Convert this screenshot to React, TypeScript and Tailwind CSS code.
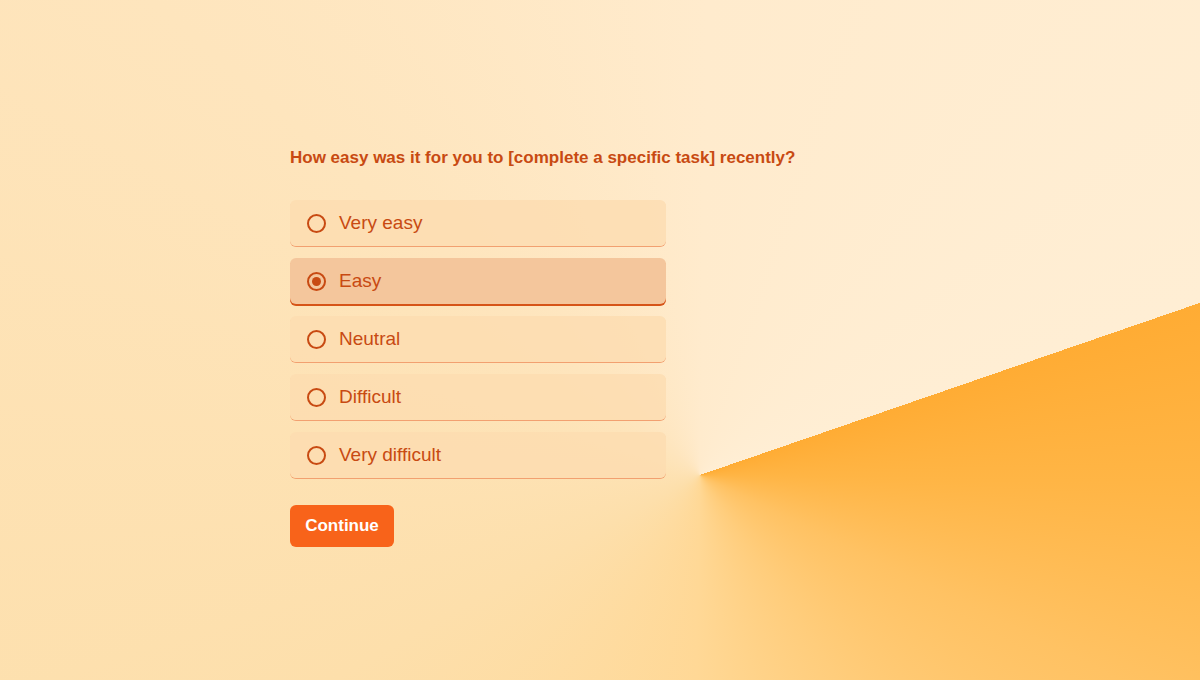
import { useState } from 'react'

const options = ['Very easy', 'Easy', 'Neutral', 'Difficult', 'Very difficult']

export default function App() {
  const [selected, setSelected] = useState('Easy')

  return (
    <div className="h-[680px] w-[1200px] overflow-hidden bg-[conic-gradient(from_71deg_at_700px_475px,#ffac34_0deg,#ffb545_20deg,#ffc263_45deg,#ffcd7c_75deg,#ffd896_110deg,#fddfab_170deg,#fee5bd_240deg,#ffebcd_290deg,#ffeed4_360deg)] font-['Liberation_Sans',Arial,sans-serif]">
      <div className="mx-auto w-[620px] pt-[146px]">
        <h1 className="text-[17px] font-bold leading-6 text-[#c84a12]">
          How easy was it for you to [complete a specific task] recently?
        </h1>

        <div className="mt-[30px] flex w-[376px] flex-col gap-3">
          {options.map((opt) => {
            const active = opt === selected
            return (
              <button
                key={opt}
                onClick={() => setSelected(opt)}
                className={`flex h-[46px] items-center gap-[13px] rounded-md px-[17px] text-left ${
                  active
                    ? 'bg-[#f4c69c] shadow-[0_2px_0_#d65418]'
                    : 'bg-[#fddcb0]/80 shadow-[0_1px_0_#f2a070]'
                }`}
              >
                <span className="flex h-[19px] w-[19px] items-center justify-center rounded-full border-2 border-[#c84a12]">
                  {active && <span className="h-[9px] w-[9px] rounded-full bg-[#c84a12]" />}
                </span>
                <span className="text-[19px] text-[#c84a12]">{opt}</span>
              </button>
            )
          })}
        </div>

        <button className="mt-[27px] h-[42px] w-[104px] rounded-md bg-[#f8631a] text-[17px] font-bold text-white">
          Continue
        </button>
      </div>
    </div>
  )
}
